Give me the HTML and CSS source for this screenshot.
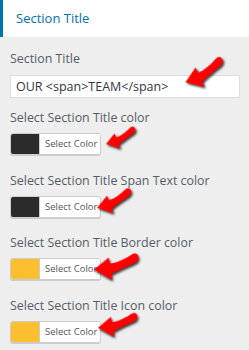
FILE: index.html
```html
<!DOCTYPE html>
<html>
  <head>
    <title>Section Title</title>
    <link rel="stylesheet" href="styles.css">
  </head>
  <body>
    <div class="sheet">
      <div class="panel-head">Section Title</div>

      <div class="controls">
        <div class="field field-text">
          <label class="field-label">Section Title</label>
          <input class="text-input" type="text" value="OUR <span>TEAM</span>">
        </div>
        <div class="field">
          <label class="field-label">Select Section Title color</label>
          <button class="color-result"><span class="swatch dark"></span><span class="color-text">Select Color</span></button>
        </div>
        <div class="field">
          <label class="field-label">Select Section Title Span Text color</label>
          <button class="color-result"><span class="swatch dark"></span><span class="color-text">Select Color</span></button>
        </div>
        <div class="field">
          <label class="field-label">Select Section Title Border color</label>
          <button class="color-result"><span class="swatch yellow"></span><span class="color-text">Select Color</span></button>
        </div>
        <div class="field">
          <label class="field-label">Select Section Title Icon color</label>
          <button class="color-result"><span class="swatch yellow"></span><span class="color-text">Select Color</span></button>
        </div>
      </div>

      <!-- red pointer arrows laid over the form -->
      <svg class="arrow arrow-1" viewBox="0 0 44 26"><use href="#arrow-shape"/></svg>
      <svg class="arrow arrow-2" viewBox="0 0 44 26"><use href="#arrow-shape"/></svg>
      <svg class="arrow arrow-3" viewBox="0 0 44 26"><use href="#arrow-shape"/></svg>
      <svg class="arrow arrow-4" viewBox="0 0 44 26"><use href="#arrow-shape"/></svg>
      <svg class="arrow arrow-5" viewBox="0 0 44 26"><use href="#arrow-shape"/></svg>

      <svg class="defs" width="0" height="0">
        <defs>
          <path id="arrow-shape" d="M0 15 L15 4 L16 10 C25 9 33 5 38 2 C42 0 45 3 44 7 C43 10 40 11 37 12 C31 14 24 17 17 20 L17 26 Z" fill="#f00"/>
        </defs>
      </svg>
    </div>
  </body>
</html>
```

FILE: styles.css
```css
body {
  margin: 0;
  padding: 0;
  background-color: #eeeeee;
  font-family: "Open Sans", Arial, sans-serif;
}

.sheet {
  position: relative;
  width: 249px;
  height: 350px;
  overflow: hidden;
}

.panel-head {
  height: 37px;
  line-height: 37px;
  background-color: #fff;
  border-left: 3px solid #0073aa;
  padding-left: 13px;
  font-size: 13px;
  color: #0073aa;
}

.controls {
  padding: 13px 9px 0 10px;
}

.field {
  margin-bottom: 16.5px;
}

.field-text {
  margin-bottom: 11px;
}

.field-label {
  display: block;
  font-size: 12.4px;
  line-height: 18px;
  color: #555d66;
  margin-bottom: 6px;
}

.text-input {
  box-sizing: border-box;
  width: 100%;
  height: 23px;
  margin: 0;
  padding: 0 5px;
  border: 1px solid #ddd;
  background: #fff;
  font-family: inherit;
  font-size: 12.5px;
  color: #32373c;
  outline: none;
}

.color-result {
  display: flex;
  height: 22px;
  width: 91px;
  margin: 0;
  padding: 0;
  border: 1px solid #ccc;
  border-radius: 3px;
  box-shadow: 0 1px 0 #ccc;
  background: #f7f7f7;
  overflow: hidden;
  font-family: inherit;
}

.swatch {
  width: 28px;
  height: 100%;
}

.swatch.dark {
  background-color: #2b2b2b;
}

.swatch.yellow {
  background-color: #fcc02e;
}

.color-text {
  flex: 1;
  height: 100%;
  line-height: 20px;
  background: #fff;
  border-left: 1px solid #ccc;
  font-size: 9.5px;
  color: #555;
  text-align: left;
  padding-left: 5px;
  white-space: nowrap;
}

.defs {
  position: absolute;
}

.arrow {
  position: absolute;
  overflow: visible;
  transform-origin: 0 57.7%;
  filter: drop-shadow(1px 2px 1px rgba(0, 0, 0, 0.75));
}

.arrow-1 { left: 185px; top: 68px; width: 43px; height: 25px; transform: rotate(-19deg); }
.arrow-2 { left: 106px; top: 133px; width: 32px; height: 19px; transform: rotate(-15deg); }
.arrow-3 { left: 97px; top: 195px; width: 37px; height: 22px; transform: rotate(-14deg); }
.arrow-4 { left: 94px; top: 254px; width: 45px; height: 27px; transform: rotate(-3deg); }
.arrow-5 { left: 98px; top: 314px; width: 40px; height: 24px; transform: rotate(-4deg); }
```
